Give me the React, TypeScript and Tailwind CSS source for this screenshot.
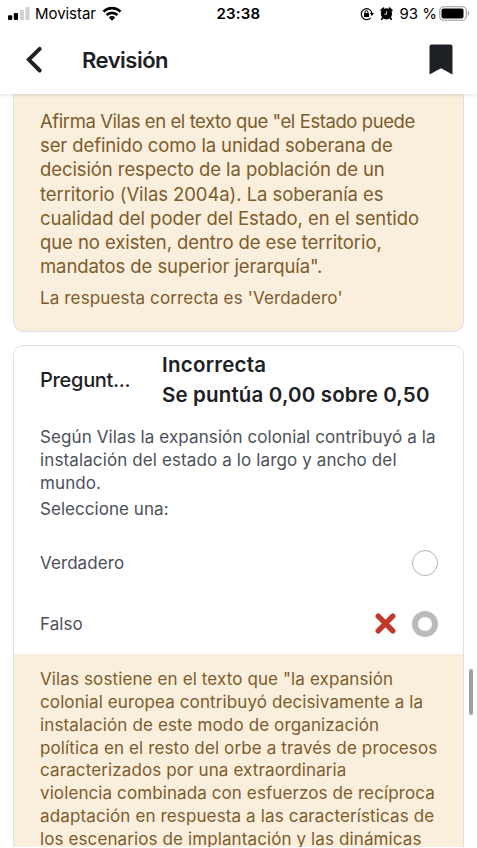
import type { ReactNode } from "react";

type TextLine = { text: string; className: string };

const previousFeedback: TextLine[] = [
  { text: 'Afirma Vilas en el texto que "el Estado puede', className: "tracking-[-0.42px]" },
  { text: "ser definido como la unidad soberana de", className: "tracking-[-0.11px]" },
  { text: "decisión respecto de la población de un", className: "tracking-[-0.09px]" },
  { text: "territorio (Vilas 2004a). La soberanía es", className: "tracking-[-0.08px]" },
  { text: "cualidad del poder del Estado, en el sentido", className: "tracking-[-0.06px]" },
  { text: "que no existen, dentro de ese territorio,", className: "tracking-[-0.08px]" },
  { text: 'mandatos de superior jerarquía".', className: "tracking-[-0.09px]" },
];

const statement: TextLine[] = [
  { text: "Según Vilas la expansión colonial contribuyó a la", className: "tracking-[0.1px]" },
  { text: "instalación del estado a lo largo y ancho del", className: "tracking-[0.12px]" },
  { text: "mundo.", className: "tracking-[0.1px]" },
];

const currentFeedback: TextLine[] = [
  { text: 'Vilas sostiene en el texto que "la expansión', className: "tracking-[0.12px]" },
  { text: "colonial europea contribuyó decisivamente a la", className: "tracking-[0.11px]" },
  { text: "instalación de este modo de organización", className: "tracking-[0.13px]" },
  { text: "política en el resto del orbe a través de procesos", className: "tracking-[0.13px]" },
  { text: "caracterizados por una extraordinaria", className: "tracking-[0.12px]" },
  { text: "violencia combinada con esfuerzos de recíproca", className: "tracking-[0.1px]" },
  { text: "adaptación en respuesta a las características de", className: "tracking-[0.13px]" },
  { text: "los escenarios de implantación y las dinámicas", className: "tracking-[0.11px]" },
];

function Lines({ lines, className }: { lines: TextLine[]; className: string }) {
  return (
    <p className={className}>
      {lines.map((line) => (
        <span key={line.text} className={`block whitespace-nowrap ${line.className}`}>
          {line.text}
        </span>
      ))}
    </p>
  );
}

function StatusBar() {
  return (
    <div className="grid h-[27px] grid-cols-3 items-center text-[15px] leading-[27px] text-black">
      <div className="flex items-center pl-2">
        <svg width="22" height="13" viewBox="0 0 22 13" aria-hidden="true">
          <rect x="0" y="8.3" width="4.2" height="4.7" rx="1" />
          <rect x="5.8" y="6" width="4.2" height="7" rx="1" />
          <rect x="11.8" y="3" width="4.2" height="10" rx="1" fill="#d2d2d2" />
          <rect x="17.4" y="0" width="4.2" height="13" rx="1" fill="#d2d2d2" />
        </svg>
        <span className="ml-[5px] tracking-[-0.05px]">Movistar</span>
        <svg className="ml-[6px]" width="20" height="15" viewBox="0 0 20 15" aria-hidden="true">
          <g fill="none" stroke="#000" strokeWidth="2.6">
            <path d="M1.5 5.6a12.2 12.2 0 0 1 17 0" />
            <path d="M4.6 9a7.8 7.8 0 0 1 10.8 0" />
          </g>
          <path d="M6.8 11.4a4.7 4.7 0 0 1 6.4 0L10 14.7z" />
        </svg>
      </div>
      <div className="text-center font-semibold tracking-[0.2px]">23:38</div>
      <div className="flex items-center justify-end pr-[7px]">
        <svg width="14" height="14" viewBox="0 0 14 14" aria-hidden="true">
          <path d="M10.6 10.8A5.4 5.4 0 1 1 11.9 6" fill="none" stroke="#000" strokeWidth="1.2" />
          <path d="M9.8 6h4.2l-2.1 3z" />
          <rect x="4" y="6" width="5" height="4" rx="0.6" />
          <path d="M5.1 6.3V5a1.4 1.4 0 0 1 2.8 0v1.3" fill="none" stroke="#000" strokeWidth="1" />
        </svg>
        <svg className="ml-[6px]" width="13" height="13" viewBox="0 0 13 13" aria-hidden="true">
          <circle cx="6.5" cy="6.8" r="5.6" />
          <path d="M1.2 3.4 3.5 1.2M11.8 3.4 9.5 1.2M2.8 10.8 1.7 12.2M10.2 10.8l1.1 1.4" stroke="#000" strokeWidth="1.7" strokeLinecap="round" />
          <path d="M6.6 4.2v3H4.2" fill="none" stroke="#fff" strokeWidth="0.8" />
        </svg>
        <span className="ml-[6px] tracking-[0px]">93 %</span>
        <svg className="ml-[2px]" width="31" height="15" viewBox="0 0 31 15" aria-hidden="true">
          <rect x="0.8" y="0.8" width="26.5" height="13.4" rx="3.8" fill="none" stroke="#9c9c9c" strokeWidth="1.1" />
          <rect x="2.5" y="2.5" width="22" height="10" rx="2" />
          <path d="M28.8 5.3c2 .6 2 3.8 0 4.4z" fill="#9c9c9c" />
        </svg>
      </div>
    </div>
  );
}

function Header() {
  return (
    <header className="relative z-10 h-[94px] shrink-0 bg-white shadow-[0_1px_4px_rgba(0,0,0,0.12)]">
      <StatusBar />
      <div className="flex h-[66px] items-center pr-6 pl-[26px]">
        <svg width="17" height="28" viewBox="0 0 17 28" aria-hidden="true">
          <path d="M13.7 2.8 2.8 13.6l10.9 10.9" fill="none" stroke="#1d2125" strokeWidth="3.9" strokeLinecap="round" strokeLinejoin="miter" />
        </svg>
        <h1 className="ml-[39px] text-[22px] leading-[30px] font-semibold tracking-[-0.5px]">Revisión</h1>
        <svg className="mb-[2px] ml-auto" width="24" height="31" viewBox="0 0 24 31" aria-hidden="true">
          <path d="M.5 2.5Q.5.5 2.5.5h19q2 0 2 2v28L12 24.3.5 30.5z" fill="#1d2125" />
        </svg>
      </div>
    </header>
  );
}

function Option({ label, children }: { label: string; children: ReactNode }) {
  return (
    <div className="flex h-[61px] items-center justify-between">
      <span className="pt-[3px] tracking-[0.08px]">{label}</span>
      <span className="flex items-center gap-4">{children}</span>
    </div>
  );
}

export default function App() {
  return (
    <div className="relative flex h-[848px] w-[477px] flex-col overflow-hidden bg-white font-['Inter','Liberation_Sans',sans-serif] text-[#1d2125]">
      <Header />
      <main className="flex flex-1 flex-col overflow-hidden px-[13px]">
        <section className="h-[238px] shrink-0 rounded-b-[10px] border border-t-0 border-[#dee2e6] bg-[#faeedd] px-[26px] pt-[15px] text-[#7d5c2b]">
          <Lines lines={previousFeedback} className="text-[18.5px] leading-[24.17px]" />
          <p className="mt-[8px] text-[17px] leading-[24px] whitespace-nowrap tracking-[0.14px]">
            La respuesta correcta es 'Verdadero'
          </p>
        </section>
        <section className="mt-[13px] h-[560px] shrink-0 overflow-hidden rounded-t-[10px] border border-[#dee2e6]">
          <div className="flex h-[68px] items-center px-[26px]">
            <h2 className="w-[122px] text-[20px] font-medium whitespace-nowrap tracking-[-0.3px]">Pregunt...</h2>
            <div className="text-[20.5px] leading-[30.5px] font-semibold whitespace-nowrap">
              <p className="tracking-[0.25px]">Incorrecta</p>
              <p className="tracking-[0.16px]">Se puntúa 0,00 sobre 0,50</p>
            </div>
          </div>
          <div className="h-[240px] pt-[12px] pr-[25px] pl-[26px] text-[17px] text-[#4b5058]">
            <Lines lines={statement} className="leading-[23px]" />
            <p className="mt-[2px] leading-[24px] tracking-[0.05px]">Seleccione una:</p>
            <div className="mt-[11px]">
              <Option label="Verdadero">
                <span className="size-[26px] rounded-full border border-[#b3b5b7]" />
              </Option>
              <Option label="Falso">
                <svg width="21" height="21" viewBox="0 0 21 21" aria-hidden="true">
                  <path d="m3.2 3.2 14.6 14.6M17.8 3.2 3.2 17.8" stroke="#c0392b" strokeWidth="5.4" strokeLinecap="round" />
                </svg>
                <span className="size-[26px] rounded-full border-[6px] border-[#b8babc]" />
              </Option>
            </div>
          </div>
          <div className="h-[260px] bg-[#faeedd] px-[26px] pt-[14px] text-[#7d5c2b]">
            <Lines lines={currentFeedback} className="text-[17px] leading-[22.86px]" />
          </div>
        </section>
      </main>
      <div className="absolute top-[669px] left-[469px] h-[46px] w-[4px] rounded-full bg-[#a0a0a3]" />
      <div className="absolute bottom-0 left-0 h-px w-full bg-white" />
    </div>
  );
}
